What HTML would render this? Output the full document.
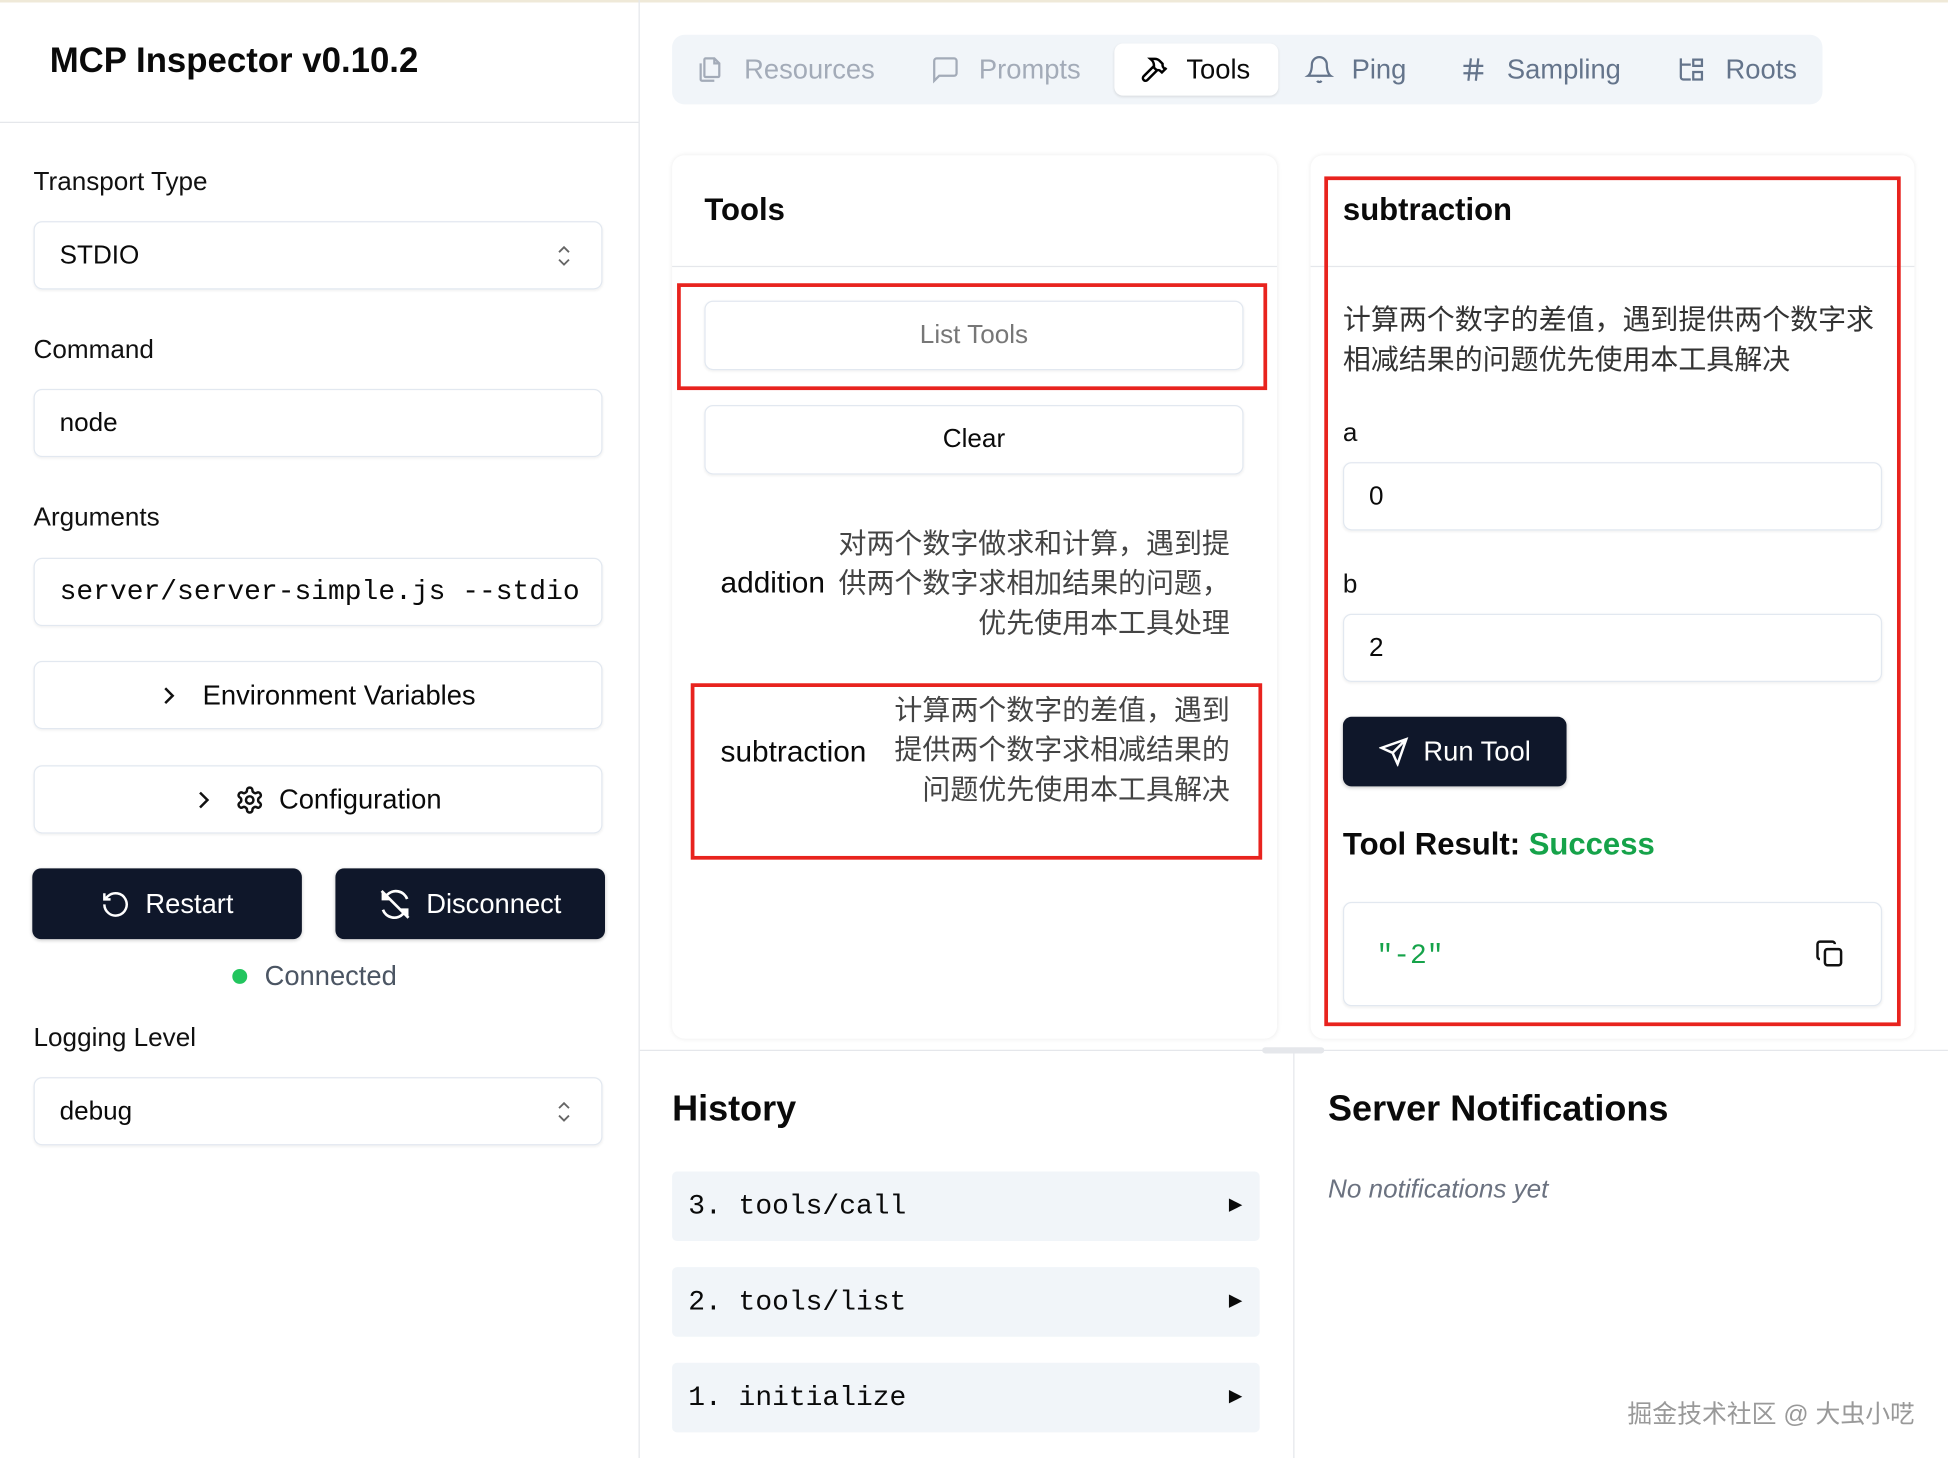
<!DOCTYPE html>
<html><head><meta charset="utf-8"><style>
html,body{margin:0;padding:0;background:#fff;overflow:hidden;width:1948px;height:1458px}
#w{position:absolute;left:0;top:0;width:1568px;height:1174px;transform:scale(1.2423);transform-origin:0 0;font-family:"Liberation Sans","Noto Sans CJK SC",sans-serif;color:#0a0a0a}
.a{position:absolute}
.lbl{font-size:21px;font-weight:500;color:#111}
.inp{position:absolute;left:27px;width:458px;height:55px;border:1px solid #e2e8f0;border-radius:7px;box-shadow:0 1px 2px rgba(0,0,0,.06);box-sizing:border-box;font-size:21px;line-height:53px;padding-left:20px}
.mono{font-family:"Liberation Mono","DejaVu Sans Mono",monospace}
.dark{position:absolute;background:#0f172a;color:#fff;border-radius:7px;font-size:22px;display:flex;align-items:center;justify-content:center;gap:12px;box-shadow:0 1px 3px rgba(0,0,0,.2)}
.tt{position:absolute;top:42px;font-size:22px;line-height:28px}
.ti{position:absolute;top:44px}
.card{position:absolute;top:125px;height:711px;background:#fff;border-radius:10px;box-shadow:0 0 4px rgba(0,0,0,.08)}
.red{position:absolute;border:3px solid #e8231e;box-sizing:border-box}
.btn{position:absolute;left:567px;width:434px;height:56px;border:1px solid #e2e8f0;border-radius:7px;box-sizing:border-box;text-align:center;line-height:54px;font-size:21px;box-shadow:0 1px 2px rgba(0,0,0,.06)}
.hist{position:absolute;left:541px;width:473px;height:56px;background:#f1f5f9;border-radius:4px;font-size:22.5px;line-height:56px;padding-left:13px;box-sizing:border-box}
.hist b{position:absolute;right:14px;top:0;font-size:18px}
.cjk{color:#444;font-size:22.5px}
</style></head><body><div id="w">
<div class="a" style="left:0;top:0;width:1568px;height:2px;background:#efe9d8"></div>
<div class="a" style="left:514px;top:0;width:1px;height:1174px;background:#e5e7eb"></div>
<div class="a" style="left:40px;top:33px;font-size:28px;font-weight:600">MCP Inspector v0.10.2</div>
<div class="a" style="left:0;top:98px;width:514px;height:1px;background:#e5e7eb"></div>

<div class="a lbl" style="left:27px;top:135px">Transport Type</div>
<div class="inp" style="top:178px">STDIO</div>
<svg class="a" style="left:447px;top:197px" width="14" height="18" viewBox="0 0 14 18"><path d="M3 6l4-4 4 4M3 12l4 4 4-4" fill="none" stroke="#666" stroke-width="1.5"/></svg>
<div class="a lbl" style="left:27px;top:270px">Command</div>
<div class="inp" style="top:313px">node</div>
<div class="a lbl" style="left:27px;top:405px">Arguments</div>
<div class="inp mono" style="top:449px;font-size:22.5px">server/server-simple.js --stdio</div>
<div class="inp" style="top:532px;padding:0;text-align:center;font-weight:500;font-size:22px"><svg width="14" height="18" viewBox="0 0 14 18" style="margin-right:20px;vertical-align:-2px"><path d="M4 3l6 6-6 6" fill="none" stroke="#111" stroke-width="2"/></svg>Environment Variables</div>
<div class="inp" style="top:616px;padding:0;text-align:center;font-weight:500;font-size:22px"><svg width="14" height="18" viewBox="0 0 14 18" style="margin-right:18px;vertical-align:-2px"><path d="M4 3l6 6-6 6" fill="none" stroke="#111" stroke-width="2"/></svg><svg width="24" height="24" viewBox="0 0 24 24" fill="none" stroke="#111" stroke-width="2" style="margin-right:12px;vertical-align:-5px"><circle cx="12" cy="12" r="3"/><path d="M12.2 2h-.4a2 2 0 0 0-2 2v.2a2 2 0 0 1-1 1.7l-.4.3a2 2 0 0 1-2 0l-.2-.1a2 2 0 0 0-2.7.7l-.2.4a2 2 0 0 0 .7 2.7l.2.1a2 2 0 0 1 1 1.7v.5a2 2 0 0 1-1 1.8l-.2.1a2 2 0 0 0-.7 2.7l.2.4a2 2 0 0 0 2.7.7l.2-.1a2 2 0 0 1 2 0l.4.3a2 2 0 0 1 1 1.7v.2a2 2 0 0 0 2 2h.4a2 2 0 0 0 2-2v-.2a2 2 0 0 1 1-1.7l.4-.3a2 2 0 0 1 2 0l.2.1a2 2 0 0 0 2.7-.7l.2-.4a2 2 0 0 0-.7-2.7l-.2-.1a2 2 0 0 1-1-1.8v-.5a2 2 0 0 1 1-1.7l.2-.1a2 2 0 0 0 .7-2.7l-.2-.4a2 2 0 0 0-2.7-.7l-.2.1a2 2 0 0 1-2 0l-.4-.3a2 2 0 0 1-1-1.7V4a2 2 0 0 0-2-2z"/></svg>Configuration</div>
<div class="dark" style="left:26px;top:699px;width:217px;height:57px"><svg width="24" height="24" viewBox="0 0 24 24" fill="none" stroke="#fff" stroke-width="2"><path d="M3 12a9 9 0 1 0 3-6.7L3 8M3 3v5h5"/></svg>Restart</div>
<div class="dark" style="left:270px;top:699px;width:217px;height:57px"><svg width="26" height="26" viewBox="0 0 24 24" fill="none" stroke="#fff" stroke-width="2"><path d="M2 2l20 20M21 8a9 9 0 0 0-15-3L3 8M3 3v5h5M3 16a9 9 0 0 0 15 3l3-3M21 21v-5h-5"/></svg>Disconnect</div>
<div class="a" style="left:187px;top:780px;width:12px;height:12px;border-radius:50%;background:#22c55e"></div>
<div class="a" style="left:213px;top:773px;font-size:22px;color:#4b5563">Connected</div>
<div class="a lbl" style="left:27px;top:824px">Logging Level</div>
<div class="inp" style="top:867px">debug</div>
<svg class="a" style="left:447px;top:886px" width="14" height="18" viewBox="0 0 14 18"><path d="M3 6l4-4 4 4M3 12l4 4 4-4" fill="none" stroke="#666" stroke-width="1.5"/></svg>

<div class="a" style="left:541px;top:28px;width:926px;height:56px;background:#f1f5f9;border-radius:10px"></div>
<div class="a" style="left:897px;top:35px;width:132px;height:42px;background:#fff;border-radius:7px;box-shadow:0 1px 2px rgba(0,0,0,.1)"></div>
<svg class="ti" style="left:560px" width="24" height="24" viewBox="0 0 24 24" fill="none" stroke="#a3abb8" stroke-width="1.8"><path d="M8 3h7l4 4v10a1 1 0 0 1-1 1H8a1 1 0 0 1-1-1V4a1 1 0 0 1 1-1zM15 3v4h4M4 7v13a1 1 0 0 0 1 1h10"/></svg>
<div class="tt" style="left:599px;color:#a3abb8">Resources</div>
<svg class="ti" style="left:749px" width="24" height="24" viewBox="0 0 24 24" fill="none" stroke="#a3abb8" stroke-width="1.8"><path d="M21 15a2 2 0 0 1-2 2H7l-4 4V5a2 2 0 0 1 2-2h14a2 2 0 0 1 2 2z"/></svg>
<div class="tt" style="left:788px;color:#a3abb8">Prompts</div>
<svg class="ti" style="left:917px" width="24" height="24" viewBox="0 0 24 24" fill="none" stroke="#000" stroke-width="2"><path d="M15 12l-8.4 8.4a2 2 0 0 1-3-3L12 9M17.6 15L22 10.6M20.9 11.8l-1.2-1.2c-.6-.6-.9-1.3-.9-2.1V7.3l-2.3-2.3a5.6 5.6 0 0 0-4-1.6H9l.9.8a6.2 6.2 0 0 1 2 4.6v1.6l2 2h1.2c.8 0 1.6.3 2.1.9l1.2 1.2"/></svg>
<div class="tt" style="left:955px;color:#0a0a0a">Tools</div>
<svg class="ti" style="left:1050px" width="24" height="24" viewBox="0 0 24 24" fill="none" stroke="#64748b" stroke-width="1.8"><path d="M6 8a6 6 0 0 1 12 0c0 7 3 9 3 9H3s3-2 3-9M10.3 21a1.9 1.9 0 0 0 3.4 0"/></svg>
<div class="tt" style="left:1088px;color:#64748b">Ping</div>
<svg class="ti" style="left:1174px" width="24" height="24" viewBox="0 0 24 24" fill="none" stroke="#64748b" stroke-width="1.8"><path d="M4 9h16M4 15h16M10 3L8 21M16 3l-2 18"/></svg>
<div class="tt" style="left:1213px;color:#64748b">Sampling</div>
<svg class="ti" style="left:1350px" width="24" height="24" viewBox="0 0 24 24" fill="none" stroke="#64748b" stroke-width="1.8"><path d="M3 3v15a2 2 0 0 0 2 2h6M3 8h8M13 4h7v5h-7zM13 14h7v6h-7z"/></svg>
<div class="tt" style="left:1389px;color:#64748b">Roots</div>

<div class="card" style="left:541px;width:487px"></div>
<div class="a" style="left:567px;top:155px;font-size:25px;font-weight:600">Tools</div>
<div class="a" style="left:541px;top:214px;width:487px;height:1px;background:#e5e7eb"></div>
<div class="btn" style="top:242px;color:#777">List Tools</div>
<div class="red" style="left:545px;top:228px;width:475px;height:86px"></div>
<div class="btn" style="top:326px;font-weight:500">Clear</div>
<div class="a cjk" style="left:670px;top:422px;width:320px;text-align:right;line-height:32px">对两个数字做求和计算，遇到提<br>供两个数字求相加结果的问题，<br>优先使用本工具处理</div>
<div class="a" style="left:580px;top:456px;font-size:24px;background:#fff;padding-right:2px">addition</div>
<div class="a cjk" style="left:710px;top:556px;width:280px;text-align:right;line-height:32px">计算两个数字的差值，遇到<br>提供两个数字求相减结果的<br>问题优先使用本工具解决</div>
<div class="a" style="left:580px;top:592px;font-size:24px;background:#fff;padding-right:6px">subtraction</div>
<div class="red" style="left:556px;top:550px;width:460px;height:142px"></div>

<div class="card" style="left:1055px;width:486px"></div>
<div class="a" style="left:1081px;top:155px;font-size:25px;font-weight:600">subtraction</div>
<div class="a" style="left:1055px;top:214px;width:486px;height:1px;background:#e5e7eb"></div>
<div class="a cjk" style="left:1081px;top:242px;line-height:32px;color:#333">计算两个数字的差值，遇到提供两个数字求<br>相减结果的问题优先使用本工具解决</div>
<div class="a lbl" style="left:1081px;top:337px">a</div>
<div class="inp" style="left:1081px;top:372px;width:434px">0</div>
<div class="a lbl" style="left:1081px;top:459px">b</div>
<div class="inp" style="left:1081px;top:494px;width:434px">2</div>
<div class="dark" style="left:1081px;top:577px;width:180px;height:56px"><svg width="24" height="24" viewBox="0 0 24 24" fill="none" stroke="#fff" stroke-width="2"><path d="M22 2L11 13M22 2l-7 20-4-9-9-4z"/></svg>Run Tool</div>
<div class="a" style="left:1081px;top:666px;font-size:25px;font-weight:600">Tool Result: <span style="color:#16a34a">Success</span></div>
<div class="inp" style="left:1081px;top:726px;width:434px;height:84px;line-height:82px;padding-left:26px;color:#16a34a;font-size:22.5px"><span class="mono">"-2"</span></div>
<svg class="a" style="left:1461px;top:756px" width="24" height="24" viewBox="0 0 24 24" fill="none" stroke="#111" stroke-width="2"><rect x="8" y="8" width="13" height="13" rx="2"/><path d="M4 16a2 2 0 0 1-2-2V4a2 2 0 0 1 2-2h10a2 2 0 0 1 2 2"/></svg>
<div class="red" style="left:1066px;top:142px;width:464px;height:684px"></div>

<div class="a" style="left:515px;top:845px;width:1053px;height:1px;background:#e5e7eb"></div>
<div class="a" style="left:1016px;top:843px;width:50px;height:5px;background:#e5e7eb;border-radius:3px"></div>
<div class="a" style="left:1041px;top:846px;width:1px;height:328px;background:#e5e7eb"></div>
<div class="a" style="left:541px;top:877px;font-size:29px;font-weight:600">History</div>
<div class="hist mono" style="top:943px">3. tools/call<b>▶</b></div>
<div class="hist mono" style="top:1020px">2. tools/list<b>▶</b></div>
<div class="hist mono" style="top:1097px">1. initialize<b>▶</b></div>
<div class="a" style="left:1069px;top:877px;font-size:29px;font-weight:600">Server Notifications</div>
<div class="a" style="left:1069px;top:946px;font-size:21px;font-style:italic;color:#6b7280">No notifications yet</div>
<div class="a" style="left:1310px;top:1122px;font-size:20px;color:#999">掘金技术社区 @ 大虫小呓</div>
</div></body></html>
